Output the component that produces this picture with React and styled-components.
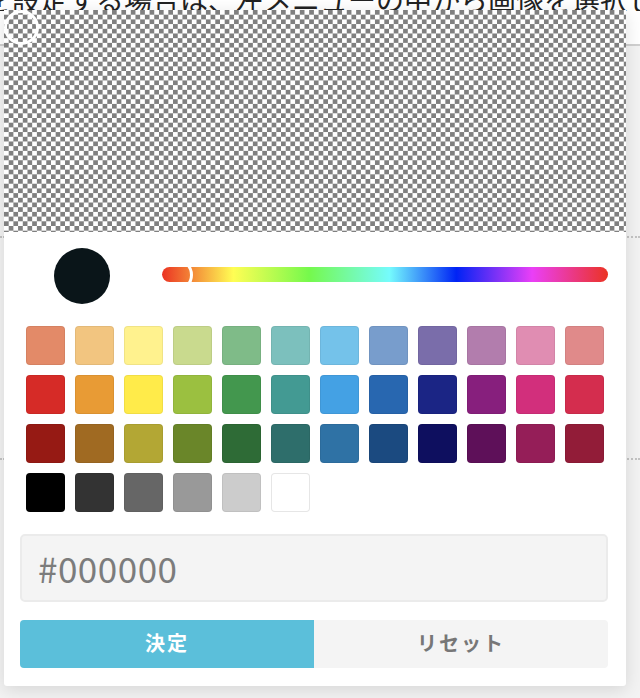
import React, { useState } from 'react'
import styled, { createGlobalStyle } from 'styled-components'

const GlobalStyle = createGlobalStyle`
  html, body {
    margin: 0;
    padding: 0;
  }
  body {
    width: 640px;
    height: 698px;
    overflow: hidden;
    background: #f3f3f3;
    font-family: "Noto Sans CJK JP", "Noto Sans", sans-serif;
  }
`

// SWATCH PALETTE, 12 PER ROW
const PALETTE = [
  '#e38a68', '#f2c580', '#fff28e', '#c9da8e', '#7fbb88', '#7cc0bd', '#74c2ea', '#789dcc', '#7a6daa', '#b27dad', '#e08db2', '#e08a8a',
  '#d62b27', '#e89b35', '#ffeb4a', '#9bc040', '#43974e', '#439a93', '#44a1e4', '#2867b0', '#1b2585', '#871f7d', '#d22f7c', '#d42d4e',
  '#961a14', '#a06a22', '#b3a734', '#6a8629', '#2e6b36', '#2e6e6b', '#2f72a5', '#1b4a80', '#0e0f5f', '#5e1059', '#951e58', '#921c38',
  '#000000', '#333333', '#666666', '#999999', '#cccccc', '#ffffff',
]

const App = () => {
  const [value, setValue] = useState('#000000');

  return (
    <Page>
      <GlobalStyle />
      <TopBand>
        <TextClip>
          <BackText>を設定する場合は、左メニューの中から画像を選択し</BackText>
        </TextClip>
      </TopBand>
      <PageBody>
        <DottedRule $top={190} />
        <DottedRule $top={412} />
      </PageBody>

      <Picker>
        <AlphaArea>
          <Cursor />
        </AlphaArea>

        <SliderRow>
          <Preview />
          <HueBar>
            <HueThumb />
          </HueBar>
        </SliderRow>

        <Swatches>
          {PALETTE.map(color => (
            <Swatch key={color} $color={color} $light={color === '#ffffff'} onClick={() => setValue(color)} />
          ))}
        </Swatches>

        <HexInput value={value} onChange={e => setValue(e.target.value)} />

        <Actions>
          <ActionButton $primary>決定</ActionButton>
          <ActionButton>リセット</ActionButton>
        </Actions>
      </Picker>
    </Page>
  )
}

const Page = styled.div`
  position: relative;
  width: 640px;
  height: 698px;
  overflow: hidden;
`

const TopBand = styled.div`
  height: 44px;
  background: #fff;
  border-bottom: 2px solid #d0d0d0;
`

// only the lower edge of this line peeks out above the popup
const TextClip = styled.div`
  height: 11px;
  overflow: hidden;
  display: flex;
  align-items: flex-end;
  margin-left: -16px;
`

const BackText = styled.p`
  margin: 0;
  white-space: nowrap;
  font-size: 28px;
  line-height: 24px;
  color: #222;
`

const PageBody = styled.div`
  position: relative;
  height: 652px;
  background: #f3f3f3;
`

const DottedRule = styled.div`
  position: absolute;
  left: 0;
  right: 0;
  top: ${p => p.$top}px;
  border-top: 2px dotted #c4c4c4;
`

const Picker = styled.div`
  position: absolute;
  z-index: 2;
  left: 4px;
  top: 10px;
  width: 622px;
  height: 676px;
  box-sizing: border-box;
  padding: 0 18px 18px 16px;
  background: #fff;
  border-radius: 0 0 3px 3px;
  box-shadow: 0 4px 18px rgba(0, 0, 0, 0.12);
  display: flex;
  flex-direction: column;
`

const AlphaArea = styled.div`
  position: relative;
  height: 222px;
  margin: 0 -18px 0 -16px;
  background-color: #fff;
  background-image: repeating-conic-gradient(#808080 0 25%, #ffffff 0 50%);
  background-size: 9.4px 9.4px;
  overflow: hidden;
`

const Cursor = styled.div`
  position: absolute;
  left: 0;
  top: 0;
  width: 35px;
  height: 35px;
  box-sizing: border-box;
  border: 3.5px solid #fff;
  border-radius: 50%;
`

const SliderRow = styled.div`
  display: flex;
  align-items: center;
  height: 56px;
  margin-top: 16px;
  padding-left: 34px;
  gap: 52px;
`

const Preview = styled.div`
  width: 56px;
  height: 56px;
  border-radius: 50%;
  background: #0a1519;
  flex: none;
`

const HueBar = styled.div`
  position: relative;
  flex: 1;
  height: 15px;
  margin-top: -2px;
  border-radius: 8px;
  background: linear-gradient(
    to right,
    #eb3323 0%,
    #fffe54 16%,
    #75f94c 33%,
    #75fbfd 51%,
    #0023f5 66%,
    #ea3ff7 83%,
    #eb3323 100%
  );
`

const HueThumb = styled.div`
  position: absolute;
  left: -3px;
  top: 50%;
  width: 34px;
  height: 34px;
  box-sizing: border-box;
  transform: translateY(-50%);
  border: 3px solid #fff;
  border-radius: 50%;
  background: transparent;
`

const Swatches = styled.div`
  display: grid;
  grid-template-columns: repeat(12, 1fr);
  gap: 9.6px 9.5px;
  margin: 22px 4px 0 6px;
`

const Swatch = styled.button`
  display: block;
  aspect-ratio: 1 / 1;
  padding: 0;
  border: 0;
  border-radius: 4px;
  background: ${p => p.$color};
  box-shadow: inset 0 0 0 1px ${p => (p.$light ? '#e6e6e6' : 'rgba(0, 0, 0, 0.06)')};
  cursor: pointer;
`

const HexInput = styled.input`
  display: block;
  height: 68px;
  margin-top: 22px;
  box-sizing: border-box;
  padding: 0 16px 2px;
  border: 2px solid #ebebeb;
  border-radius: 5px;
  background: #f4f4f4;
  font-family: "Noto Sans CJK JP", "Noto Sans", sans-serif;
  font-size: 35px;
  letter-spacing: 0.5px;
  color: #7c7c7c;
  outline: none;
`

const Actions = styled.div`
  display: grid;
  grid-template-columns: 1fr 1fr;
  margin-top: 18px;
  border-radius: 4px;
  overflow: hidden;
`

const ActionButton = styled.button`
  height: 48px;
  padding: 0 0 4px;
  border: 0;
  background: ${p => (p.$primary ? '#5bbfda' : '#f4f4f4')};
  color: ${p => (p.$primary ? '#fff' : '#777')};
  font-family: "Noto Sans CJK JP", sans-serif;
  font-size: 20px;
  font-weight: 700;
  letter-spacing: 2px;
  cursor: pointer;
`

export default App
